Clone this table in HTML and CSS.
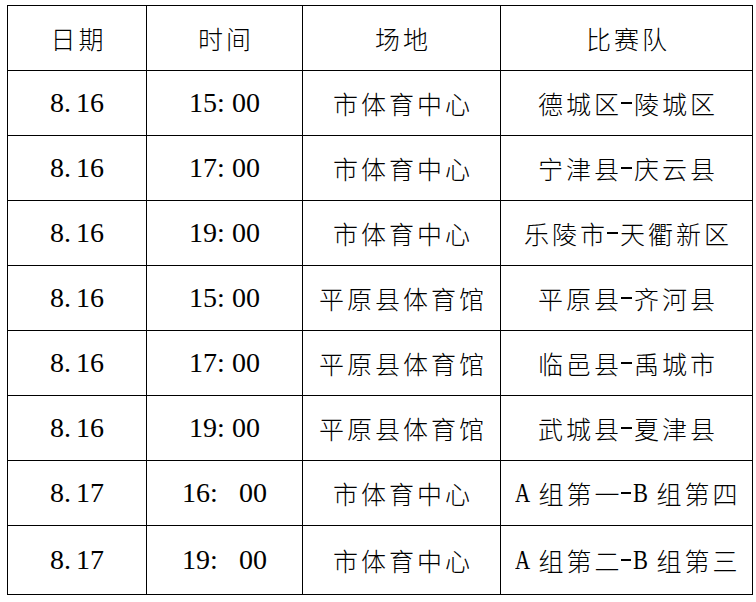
FILE: index.html
```html
<!DOCTYPE html>
<html lang="zh-CN">
<head>
<meta charset="utf-8">
<title>比赛安排</title>
<link rel="stylesheet" href="styles.css">
</head>
<body>
<div class="page">
  <div class="schedule">
    <div class="cell zh">日期</div>
    <div class="cell zh">时间</div>
    <div class="cell zh">场地</div>
    <div class="cell zh">比赛队</div>

    <div class="cell num">8<span class="dot">.</span>16</div>
    <div class="cell num">15<span class="col">:</span>00</div>
    <div class="cell zh">市体育中心</div>
    <div class="cell zh">德城区<span class="dash">-</span>陵城区</div>

    <div class="cell num">8<span class="dot">.</span>16</div>
    <div class="cell num">17<span class="col">:</span>00</div>
    <div class="cell zh">市体育中心</div>
    <div class="cell zh">宁津县<span class="dash">-</span>庆云县</div>

    <div class="cell num">8<span class="dot">.</span>16</div>
    <div class="cell num">19<span class="col">:</span>00</div>
    <div class="cell zh">市体育中心</div>
    <div class="cell zh">乐陵市<span class="dash">-</span>天衢新区</div>

    <div class="cell num">8<span class="dot">.</span>16</div>
    <div class="cell num">15<span class="col">:</span>00</div>
    <div class="cell zh">平原县体育馆</div>
    <div class="cell zh">平原县<span class="dash">-</span>齐河县</div>

    <div class="cell num">8<span class="dot">.</span>16</div>
    <div class="cell num">17<span class="col">:</span>00</div>
    <div class="cell zh">平原县体育馆</div>
    <div class="cell zh">临邑县<span class="dash">-</span>禹城市</div>

    <div class="cell num">8<span class="dot">.</span>16</div>
    <div class="cell num">19<span class="col">:</span>00</div>
    <div class="cell zh">平原县体育馆</div>
    <div class="cell zh">武城县<span class="dash">-</span>夏津县</div>

    <div class="cell num">8<span class="dot">.</span>17</div>
    <div class="cell num">16<span class="col wide">: </span>00</div>
    <div class="cell zh">市体育中心</div>
    <div class="cell zh"><span class="lat a">A</span>组第一<span class="dash short">-</span><span class="lat b">B</span>组第四</div>

    <div class="cell num">8<span class="dot">.</span>17</div>
    <div class="cell num">19<span class="col wide">: </span>00</div>
    <div class="cell zh">市体育中心</div>
    <div class="cell zh"><span class="lat a">A</span>组第二<span class="dash short">-</span><span class="lat b">B</span>组第三</div>
  </div>
</div>
</body>
</html>
```

FILE: styles.css
```css
html, body {
  margin: 0;
  padding: 0;
  background: #fff;
}

.page {
  padding: 5px 0 0 7px;
}

.schedule {
  display: grid;
  width: 744px;
  grid-template-columns: 138px 155px 197px 251px;
  grid-template-rows: repeat(8, 64px) 68px;
  gap: 1px;
  padding: 1px;
  background: #000;
  color: #000;
}

.cell {
  background: #fff;
  display: flex;
  align-items: center;
  justify-content: center;
  white-space: nowrap;
  line-height: 1;
}

.num {
  font-family: "Liberation Serif", "Times New Roman", serif;
  font-size: 28px;
  padding-bottom: 1px;
}

.zh {
  font-family: "Noto Sans CJK SC", sans-serif;
  font-size: 25px;
  font-weight: 300;
  letter-spacing: 3px;
  padding-left: 3px;
}

.dot {
  display: inline-block;
  width: 12px;
}

.col {
  display: inline-block;
  width: 15px;
}

.col.wide {
  width: 29px;
}

.lat {
  display: inline-block;
  font-family: "Liberation Serif", "Times New Roman", serif;
  font-size: 28px;
  font-weight: 400;
  letter-spacing: 0;
  transform-origin: left center;
}

.lat.a {
  width: 23px;
  transform: scaleX(0.75);
}

.lat.b {
  width: 24px;
  transform: scaleX(0.8);
}

.dash {
  display: inline-block;
  width: 11px;
  height: 2px;
  margin: 0 2px 0 -1px;
  overflow: hidden;
  font-size: 2px;
  line-height: 2px;
  letter-spacing: 0;
  color: transparent;
  background: #000;
  vertical-align: 10px;
}

.dash.short {
  width: 10px;
  margin: 0 2px 0 -2px;
}
```
